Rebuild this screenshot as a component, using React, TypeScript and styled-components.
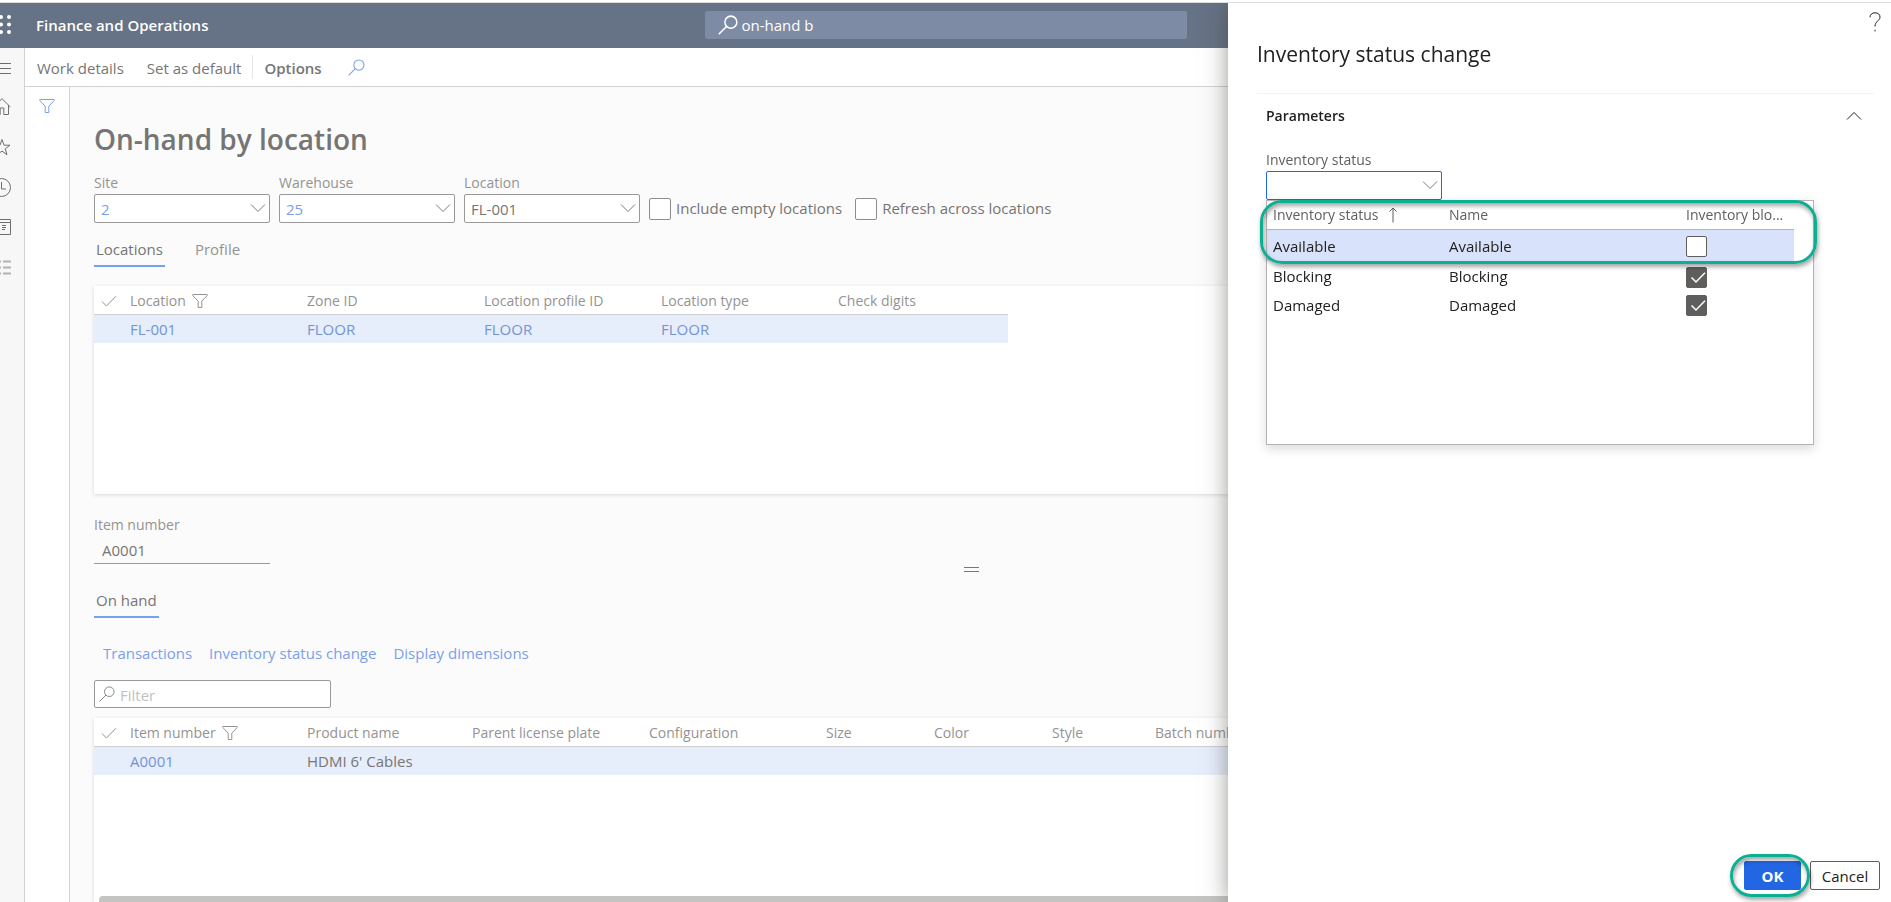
import React from "react";
import styled, { createGlobalStyle, css } from "styled-components";

const GlobalStyle = createGlobalStyle`
  *, *::before, *::after { box-sizing: border-box; }
  body {
    margin: 0;
    background: #fff;
    font-family: "Segoe UI", "Open Sans", "Noto Sans", sans-serif;
    font-size: 15px;
    line-height: 20px;
    color: #767574;
  }
  button, input { font: inherit; color: inherit; }
  button { padding: 0; border: 0; background: none; cursor: pointer; }
  a { text-decoration: none; }
`;

const colors = {
  header: "#667285",
  search: "#7d8ba4",
  line: "#d2d2d2",
  label: "#949392",
  text: "#767574",
  link: "#7a9fee",
  accent: "#2266e3",
  ink: "#222120",
  mark: "#0bb092",
};

/* ---------- shell ---------- */

const Page = styled.div`
  height: 100vh;
  overflow: hidden;
  display: flex;
  flex-direction: column;
  border-top: 2px solid #fff;
`;

const Header = styled.header`
  flex: none;
  height: 46px;
  border-top: 1px solid #dcdcdc;
  background: ${colors.header};
  color: #fff;
  display: grid;
  grid-template-columns: 1fr 482px 1fr;
  align-items: center;
`;

const Brand = styled.div`
  padding-bottom: 2px;
  display: flex;
  align-items: center;
  gap: 25px;
  font-weight: 600;
`;

const Waffle = styled.button`
  width: 11px;
  display: flex;
  justify-content: flex-end;

  svg { flex: none; }
`;

const SearchBox = styled.label`
  height: 28px;
  margin-bottom: 2px;
  padding: 0 13px;
  display: flex;
  align-items: center;
  gap: 4px;
  border-radius: 2px;
  background: ${colors.search};

  svg { flex: none; }
`;

const SearchInput = styled.input`
  flex: 1;
  min-width: 0;
  padding: 0;
  border: 0;
  outline: 0;
  background: none;
`;

const Body = styled.div`
  flex: 1;
  min-height: 0;
  display: flex;
`;

const Rail = styled.nav`
  flex: none;
  width: 25px;
  padding-right: 13px;
  border-right: 1px solid ${colors.line};
  background: #f7f7f7;
  display: flex;
  flex-direction: column;
  align-items: flex-end;
  overflow: hidden;
`;

const RailButton = styled.button`
  flex: none;
  height: 40px;
  display: flex;
  align-items: center;
  color: #6f6e6d;

  &:first-child { height: 39px; }
`;

const Main = styled.main`
  flex: 1;
  min-width: 0;
  display: flex;
  flex-direction: column;
`;

const ActionBar = styled.div`
  flex: none;
  height: 39px;
  padding-left: 12px;
  border-bottom: 1px solid ${colors.line};
  display: flex;
  align-items: center;
  background: #fff;
`;

const Action = styled.button<{ $strong?: boolean }>`
  margin-right: ${(p) => (p.$strong ? 26 : 23)}px;
  padding-top: 2px;
  font-weight: ${(p) => (p.$strong ? 600 : 400)};
`;

const Divider = styled.span`
  width: 1px;
  height: 24px;
  margin: 0 11px 0 -12px;
  background: #e6e6e6;
`;

const IconButton = styled.button`
  display: flex;
  color: ${colors.link};
`;

const Workspace = styled.div`
  flex: 1;
  min-height: 0;
  display: flex;
`;

const FilterPane = styled.aside`
  flex: none;
  width: 45px;
  padding-top: 12px;
  border-right: 1px solid ${colors.line};
  background: #fff;
  display: flex;
  flex-direction: column;
  align-items: center;
`;

const Content = styled.div`
  flex: 1;
  min-width: 0;
  padding: 32px 42px 0 24px;
  display: flex;
  flex-direction: column;
  background: #fbfbfb;
`;

const Title = styled.h1`
  margin: 0;
  font-size: 28px;
  line-height: 40px;
  font-weight: 600;
`;

/* ---------- fields ---------- */

const FieldRow = styled.div`
  display: flex;
  align-items: flex-end;
  gap: 9px;
  padding-top: 14px;
`;

const Field = styled.div`
  width: 176px;
  display: flex;
  flex-direction: column;
`;

const Label = styled.label<{ $dark?: boolean }>`
  margin-bottom: 1px;
  font-size: 14px;
  font-weight: 500;
  color: ${(p) => (p.$dark ? "#605f5e" : colors.label)};
`;

const ComboBox = styled.div<{ $focused?: boolean }>`
  height: 29px;
  padding-right: 3px;
  border: 1px solid ${(p) => (p.$focused ? colors.accent : "#9a9998")};
  border-radius: 2px;
  background: #fff;
  display: flex;
  align-items: center;
`;

const ComboInput = styled.input<{ $link?: boolean }>`
  flex: 1;
  min-width: 0;
  height: 100%;
  padding: 0 6px;
  border: 0;
  outline: 0;
  background: none;
  color: ${(p) => (p.$link ? colors.link : colors.text)};
`;

const ComboButton = styled.button`
  display: flex;
  padding-bottom: 2px;
  color: #7c7b7a;
`;

const PlainInput = styled.input`
  height: 28px;
  padding: 0 8px;
  border: 0;
  border-bottom: 1px solid #9a9998;
  background: none;
`;

const CheckLabel = styled.label`
  display: flex;
  align-items: flex-start;
  gap: 5px;
  margin-right: 4px;
  padding-bottom: 3px;
`;

const boxBase = css`
  appearance: none;
  display: block;
  margin: 0;
  border: 1px solid #8f8e8d;
  border-radius: 2px;
  background: #fff;
`;

const CheckBox = styled.input.attrs({ type: "checkbox" })`
  ${boxBase}
  width: 22px;
  height: 22px;
`;

const TabBar = styled.div`
  display: flex;
  gap: 28px;
`;

const Tab = styled.button<{ $active?: boolean }>`
  height: 28px;
  padding: 0 2px 6px;
  border-bottom: 2px solid ${(p) => (p.$active ? "#76a1f0" : "transparent")};
  color: ${(p) => (p.$active ? colors.text : colors.label)};
`;

const TopTabs = styled(TabBar)`
  padding-top: 16px;
`;

const ItemTabs = styled(TabBar)`
  padding-top: 18px;
`;

/* ---------- grids ---------- */

const Sheet = styled.section<{ $fill?: boolean }>`
  margin-right: -42px;
  background: #fff;
  box-shadow: 0 1px 4px rgba(0, 0, 0, 0.14);
  ${(p) =>
    p.$fill
      ? css`
          flex: 1;
          min-height: 0;
          margin-top: 10px;
          display: flex;
          flex-direction: column;
          justify-content: space-between;
          overflow: hidden;
        `
      : css`
          flex: none;
          height: 208px;
          margin-top: 19px;
        `}
`;

const Grid = styled.table`
  border-collapse: collapse;
  table-layout: fixed;
  width: 0;
`;

const Head = styled.th`
  height: 28px;
  padding: 2px 0 0;
  border-bottom: 1px solid #cfcfcf;
  text-align: left;
  white-space: nowrap;
  font-size: 14px;
  font-weight: 500;
  color: ${colors.label};
`;

const HeadInner = styled.span<{ $indent?: boolean; $wide?: boolean }>`
  display: flex;
  align-items: center;
  gap: ${(p) => (p.$wide ? 10 : 6)}px;
  padding-left: ${(p) => (p.$indent ? 7 : 0)}px;
`;

const Cell = styled.td`
  height: 29px;
  padding: 0;
  background: #e6edfb;
  white-space: nowrap;
`;

const CellLink = styled.a`
  color: #7394d3;
`;

const Splitter = styled.div`
  height: 5px;
  width: 15px;
  margin-top: 3px;
  align-self: center;
  border-top: 1px solid #777;
  border-bottom: 1px solid #777;
`;

const ItemArea = styled.div`
  display: flex;
  flex-direction: column;
  padding-top: 21px;
`;

const Links = styled.div`
  display: flex;
  gap: 17px;
  padding: 25px 9px 17px;
`;

const LinkButton = styled.button`
  color: ${colors.link};
`;

const FilterBox = styled.label`
  width: 237px;
  height: 28px;
  padding: 0 4px;
  border: 1px solid #9a9998;
  border-radius: 2px;
  background: #fff;
  display: flex;
  align-items: center;
  gap: 5px;
  color: #8a8988;
`;

const FilterInput = styled.input`
  flex: 1;
  min-width: 0;
  padding: 2px 0 0;
  border: 0;
  outline: 0;
  background: none;

  &::placeholder { color: #c2c1c0; opacity: 1; }
`;

const ScrollThumb = styled.div`
  flex: none;
  height: 6px;
  margin-left: 5px;
  border-radius: 4px 0 0 0;
  background: #c4c4c3;
`;

/* ---------- dialog ---------- */

const Drawer = styled.section`
  position: fixed;
  top: 3px;
  right: 0;
  bottom: 0;
  width: 663px;
  padding: 9px 17px 12px 29px;
  background: #fff;
  box-shadow: 0 0 22px rgba(60, 55, 50, 0.5);
  clip-path: inset(0 0 0 -40px);
  color: ${colors.ink};
  display: flex;
  flex-direction: column;
`;

const DrawerTop = styled.div`
  height: 20px;
  margin-right: -7px;
  display: flex;
  justify-content: flex-end;
`;

const DrawerTitle = styled.h2`
  margin: 6px 0 23px;
  font-size: 21px;
  line-height: 32px;
  font-weight: 500;
`;

const SectionHead = styled.button`
  height: 44px;
  padding: 0 12px 0 9px;
  border-top: 1px solid #f3f3f3;
  display: flex;
  align-items: center;
  justify-content: space-between;
  font-size: 14px;
  font-weight: 600;
`;

const SectionBody = styled.div`
  flex: 1;
  padding: 13px 9px 0;
`;

const Lookup = styled(Field)`
  position: relative;
`;

const LookupPanel = styled.div`
  position: absolute;
  top: 50px;
  left: 0;
  width: 548px;
  height: 245px;
  border: 1px solid #b5b4b3;
  background: #fff;
  box-shadow: 0 4px 10px rgba(0, 0, 0, 0.15);
`;

const LookupGrid = styled.table`
  width: 527px;
  border-collapse: collapse;
  table-layout: fixed;

  th, td { padding: 0 0 0 6px; text-align: left; white-space: nowrap; }
  th {
    height: 28px;
    border-bottom: 1px solid #b5b4b3;
    font-size: 14px;
    font-weight: 500;
    color: #605f5e;
  }
  th:last-child, td:last-child { padding-left: 0; }
  td:not(:last-child) { padding-bottom: 2px; }
`;

const LookupRow = styled.tr<{ $selected?: boolean }>`
  height: ${(p) => (p.$selected ? 33 : 29)}px;

  ${(p) =>
    p.$selected &&
    css`
      td { background: #d8e3fb; border-bottom: 3px solid #fff; padding-top: 3px; }
    `}
`;

const Tick = styled.input.attrs({ type: "checkbox" })`
  ${boxBase}
  width: 21px;
  height: 21px;
  border-color: #5f5e5d;
`;

const TickWrap = styled.span`
  display: grid;
  width: 21px;

  > * { grid-area: 1 / 1; }
  svg { color: #fff; pointer-events: none; }
  input:checked { background: #5f5e5d; }
`;

const Callout = styled.div`
  position: absolute;
  border: 3px solid ${colors.mark};
  pointer-events: none;
  box-shadow: 1px 3px 4px rgba(0, 0, 0, 0.35), inset 1px 3px 4px rgba(0, 0, 0, 0.35);
`;

const LookupCallout = styled(Callout)`
  inset: -1px -4px 180px -7px;
  border-radius: 22px;
`;

const Footer = styled.footer`
  display: flex;
  justify-content: flex-end;
  gap: 9px;
  margin-right: -6px;
`;

const OkWrap = styled.div`
  position: relative;
`;

const OkCallout = styled(Callout)`
  inset: -7px -9px -7px -14px;
  border-radius: 22px;
`;

const DialogButton = styled.button<{ $primary?: boolean }>`
  display: block;
  width: ${(p) => (p.$primary ? 57 : 70)}px;
  height: 29px;
  border: 1px solid ${(p) => (p.$primary ? colors.accent : "#5f5e5d")};
  border-radius: 2px;
  background: ${(p) => (p.$primary ? colors.accent : "#fff")};
  color: ${(p) => (p.$primary ? "#fff" : colors.ink)};
  font-weight: ${(p) => (p.$primary ? 700 : 400)};
`;

/* ---------- icons ---------- */

const Svg = ({ w, h, sw = 1, children }: { w: number; h: number; sw?: number; children: React.ReactNode }) => (
  <svg width={w} height={h} viewBox={`0 0 ${w} ${h}`} fill="none" stroke="currentColor" strokeWidth={sw} aria-hidden="true">
    {children}
  </svg>
);

const WaffleIcon = () => (
  <svg width="19" height="19" viewBox="0 0 19 19" fill="currentColor" aria-hidden="true">
    {[2, 9.5, 17].map((y) => [1, 9, 17].map((x) => <circle key={`${x}-${y}`} cx={x} cy={y} r="2" />))}
  </svg>
);
const SearchIcon = ({ size = 16, sw = 1 }: { size?: number; sw?: number }) => (
  <svg width={size} height={size} viewBox="0 0 16 16" fill="none" stroke="currentColor" strokeWidth={sw} aria-hidden="true">
    <circle cx="10.3" cy="5.7" r="4.8" />
    <path d="M6.9 9.1 0.6 15.4" />
  </svg>
);
const FunnelIcon = () => (
  <Svg w={16} h={14}>
    <path d="M0.8 0.5h14.4v1L9.8 7.2v6.3H6.2V7.2L0.8 1.5z" />
  </Svg>
);
const ChevronDown = () => (
  <Svg w={16} h={10}>
    <path d="M1 1.5 8 8.5 15 1.5" />
  </Svg>
);
const ChevronUp = () => (
  <Svg w={16} h={10}>
    <path d="M1 8.5 8 1.5 15 8.5" />
  </Svg>
);
const CheckIcon = () => (
  <Svg w={16} h={12}>
    <path d="M1 6.5 5.5 11 15 1.2" />
  </Svg>
);
const WhiteCheck = () => (
  <Svg w={21} h={21} sw={1.5}>
    <path d="M5.5 10.5 10 15 19 5.8" />
  </Svg>
);
const ArrowUp = () => (
  <Svg w={10} h={16}>
    <path d="M5 15.5V1M1.5 4.5 5 1l3.5 3.5" />
  </Svg>
);
const MenuIcon = () => (
  <Svg w={18} h={12}>
    <path d="M0 1.5h18M0 6.5h18M0 11.5h18" />
  </Svg>
);
const HomeIcon = () => (
  <Svg w={18} h={18}>
    <path d="M0.6 9 9 0.7l8.4 8.3M3 7v9.5h4.2V10h3.6v6.5H15.5V7" />
  </Svg>
);
const StarIcon = () => (
  <Svg w={18} h={18}>
    <path d="M9 1.5l2 5.7h6l-4.8 3.6 1.8 5.9L9 13.1l-5 3.6 1.8-5.9L1 7.2h6z" />
  </Svg>
);
const ClockIcon = () => (
  <Svg w={19} h={19}>
    <circle cx="9.5" cy="9.5" r="9" />
    <path d="M9.5 4v7H14" />
  </Svg>
);
const BoardIcon = () => (
  <Svg w={20} h={16}>
    <path d="M0.5 0.5h19v15H0.5zM0.5 3.5h19M11 6.5h4M11 8.5h4M11 10.5h3" />
    <path d="M4 6h5v6H4z" fill="#5b84b8" stroke="none" />
  </Svg>
);
const ListIcon = () => (
  <Svg w={18} h={15} sw={2}>
    <path d="M0 1.5h8M10 1.5h8M0 7.5h8M10 7.5h8M0 13.5h8M10 13.5h8" stroke="#b0b3b3" />
  </Svg>
);
const HelpIcon = () => (
  <Svg w={12} h={20}>
    <path d="M1 5.3C1 2.5 3 0.8 6 0.8s5 1.6 5 4.3c0 3.5-5 4.2-5 9.4" />
    <path d="M6 17.8v1.6" />
  </Svg>
);

/* ---------- data ---------- */

const lookups = [
  { id: "site", label: "Site", value: "2", link: true },
  { id: "warehouse", label: "Warehouse", value: "25", link: true },
  { id: "location", label: "Location", value: "FL-001", link: false },
];

const rail = [
  { name: "Menu", Icon: MenuIcon },
  { name: "Home", Icon: HomeIcon },
  { name: "Favorites", Icon: StarIcon },
  { name: "Recent", Icon: ClockIcon },
  { name: "Workspaces", Icon: BoardIcon },
  { name: "Modules", Icon: ListIcon },
];

type Column = { title: string; width: number; value?: string; link?: boolean; filter?: boolean };

const locationColumns: Column[] = [
  { title: "Location", width: 177, value: "FL-001", link: true, filter: true },
  { title: "Zone ID", width: 177, value: "FLOOR", link: true },
  { title: "Location profile ID", width: 177, value: "FLOOR", link: true },
  { title: "Location type", width: 177, value: "FLOOR", link: true },
  { title: "Check digits", width: 170 },
];

const itemColumns: Column[] = [
  { title: "Item number", width: 177, value: "A0001", link: true, filter: true },
  { title: "Product name", width: 165, value: "HDMI 6' Cables" },
  { title: "Parent license plate", width: 177 },
  { title: "Configuration", width: 177 },
  { title: "Size", width: 108 },
  { title: "Color", width: 118 },
  { title: "Style", width: 103 },
  { title: "Batch number", width: 177 },
];

const statuses = [
  { name: "Available", blocking: false },
  { name: "Blocking", blocking: true },
  { name: "Damaged", blocking: true },
];

const DataGrid = ({ columns }: { columns: Column[] }) => (
  <Grid>
    <colgroup>
      <col width={36} />
      {columns.map((c) => (
        <col key={c.title} width={c.width} />
      ))}
    </colgroup>
    <thead>
      <tr>
        <Head aria-label="Select">
          <HeadInner $indent>
            <CheckIcon />
          </HeadInner>
        </Head>
        {columns.map((c) => (
          <Head key={c.title}>
            <HeadInner>
              {c.title}
              {c.filter && <FunnelIcon />}
            </HeadInner>
          </Head>
        ))}
      </tr>
    </thead>
    <tbody>
      <tr>
        <Cell />
        {columns.map((c) => (
          <Cell key={c.title}>{c.link ? <CellLink href="#">{c.value}</CellLink> : c.value}</Cell>
        ))}
      </tr>
    </tbody>
  </Grid>
);

export default function App() {
  return (
    <Page>
      <GlobalStyle />
      <Header>
        <Brand>
          <Waffle aria-label="Apps">
            <WaffleIcon />
          </Waffle>
          Finance and Operations
        </Brand>
        <SearchBox>
          <SearchIcon size={20} sw={1.2} />
          <SearchInput aria-label="Search" defaultValue="on-hand b" />
        </SearchBox>
      </Header>
      <Body>
        <Rail>
          {rail.map(({ name, Icon }) => (
            <RailButton key={name} aria-label={name}>
              <Icon />
            </RailButton>
          ))}
        </Rail>
        <Main>
          <ActionBar>
            <Action>Work details</Action>
            <Action>Set as default</Action>
            <Divider />
            <Action $strong>Options</Action>
            <IconButton aria-label="Search actions">
              <SearchIcon size={17} />
            </IconButton>
          </ActionBar>
          <Workspace>
            <FilterPane>
              <IconButton aria-label="Show filters">
                <FunnelIcon />
              </IconButton>
            </FilterPane>
            <Content>
              <Title>On-hand by location</Title>
              <FieldRow>
                {lookups.map((f) => (
                  <Field key={f.id}>
                    <Label htmlFor={f.id}>{f.label}</Label>
                    <ComboBox>
                      <ComboInput id={f.id} defaultValue={f.value} $link={f.link} />
                      <ComboButton aria-label={`Open ${f.label}`}>
                        <ChevronDown />
                      </ComboButton>
                    </ComboBox>
                  </Field>
                ))}
                <CheckLabel>
                  <CheckBox />
                  Include empty locations
                </CheckLabel>
                <CheckLabel>
                  <CheckBox />
                  Refresh across locations
                </CheckLabel>
              </FieldRow>
              <TopTabs>
                <Tab $active>Locations</Tab>
                <Tab>Profile</Tab>
              </TopTabs>
              <Sheet>
                <DataGrid columns={locationColumns} />
              </Sheet>
              <ItemArea>
                <Field>
                  <Label htmlFor="item">Item number</Label>
                  <PlainInput id="item" defaultValue="A0001" readOnly />
                </Field>
                <Splitter role="separator" />
              </ItemArea>
              <ItemTabs>
                <Tab $active>On hand</Tab>
              </ItemTabs>
              <Links>
                <LinkButton>Transactions</LinkButton>
                <LinkButton>Inventory status change</LinkButton>
                <LinkButton>Display dimensions</LinkButton>
              </Links>
              <FilterBox>
                <SearchIcon />
                <FilterInput aria-label="Filter" placeholder="Filter" />
              </FilterBox>
              <Sheet $fill>
                <DataGrid columns={itemColumns} />
                <ScrollThumb />
              </Sheet>
            </Content>
          </Workspace>
        </Main>
      </Body>

      <Drawer role="dialog" aria-labelledby="dialog-title">
        <DrawerTop>
          <button aria-label="Help">
            <HelpIcon />
          </button>
        </DrawerTop>
        <DrawerTitle id="dialog-title">Inventory status change</DrawerTitle>
        <SectionHead aria-expanded="true">
          Parameters
          <ChevronUp />
        </SectionHead>
        <SectionBody>
          <Lookup>
            <Label htmlFor="status" $dark>
              Inventory status
            </Label>
            <ComboBox $focused>
              <ComboInput id="status" role="combobox" aria-expanded="true" />
              <ComboButton aria-label="Open Inventory status">
                <ChevronDown />
              </ComboButton>
            </ComboBox>
            <LookupPanel>
              <LookupGrid>
                <colgroup>
                  <col width={176} />
                  <col width={243} />
                  <col width={108} />
                </colgroup>
                <thead>
                  <tr>
                    <th>
                      <HeadInner $wide>
                        Inventory status
                        <ArrowUp />
                      </HeadInner>
                    </th>
                    <th>Name</th>
                    <th>Inventory blo...</th>
                  </tr>
                </thead>
                <tbody>
                  {statuses.map((s, i) => (
                    <LookupRow key={s.name} $selected={i === 0}>
                      <td>{s.name}</td>
                      <td>{s.name}</td>
                      <td>
                        <TickWrap>
                          <Tick defaultChecked={s.blocking} aria-label={`${s.name} is blocking`} />
                          {s.blocking && <WhiteCheck />}
                        </TickWrap>
                      </td>
                    </LookupRow>
                  ))}
                </tbody>
              </LookupGrid>
              <LookupCallout />
            </LookupPanel>
          </Lookup>
        </SectionBody>
        <Footer>
          <OkWrap>
            <DialogButton $primary>OK</DialogButton>
            <OkCallout />
          </OkWrap>
          <DialogButton>Cancel</DialogButton>
        </Footer>
      </Drawer>
    </Page>
  );
}
